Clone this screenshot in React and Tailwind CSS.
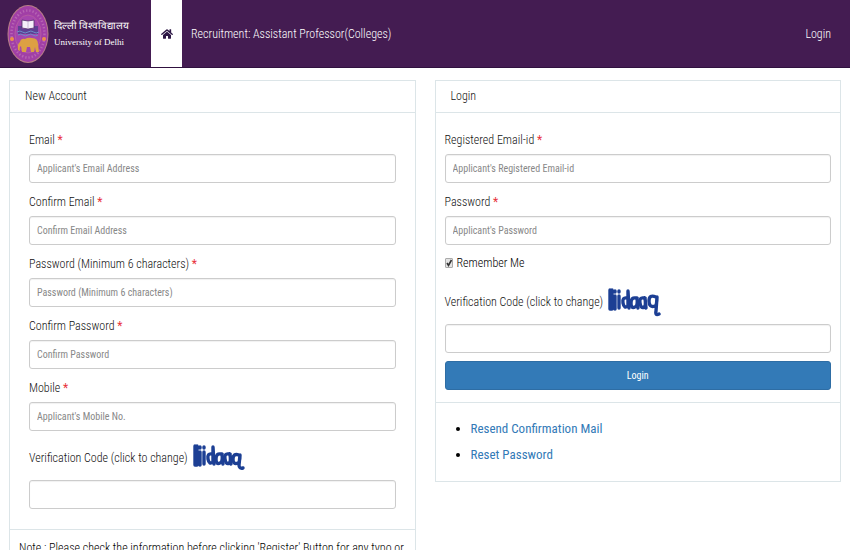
import { FaHome } from "react-icons/fa";

function Emblem() {
  return (
    <svg viewBox="0 0 42 60" className="h-[60px] w-[42px]" role="img" aria-label="University emblem">
      <ellipse cx="21" cy="30" rx="20.5" ry="29" fill="#b87f86" />
      <ellipse cx="21" cy="30" rx="19.5" ry="28" fill="#a13fa6" />
      <ellipse cx="21" cy="30" rx="16.5" ry="23.500" fill="none" stroke="#b765b4" strokeWidth="2.500" strokeDasharray="1.300 2" />
      <ellipse cx="21" cy="30" rx="13" ry="19" fill="#a546ae" stroke="#b9609f" strokeWidth="0.800" />
      <path d="M11 22h4v3h12v-3h4v8H11z" fill="#5f3f93" />
      <path d="M15 16l6 1 6-1v8l-6 1-6-1z" fill="#f6effa" stroke="#513069" strokeWidth="0.800" />
      <path d="M21 17v8" stroke="#b7a3c4" strokeWidth="0.700" />
      <path d="M10 28q3-2 5.500 0t5.500 0 5.500 0 5.500 0M11 31q3-2 5 0t5 0 5 0 5 0" fill="none" stroke="#6d8fc9" strokeWidth="1" />
      <path d="M15 48l-1-6q-2 1-1 5l-2-1q-1-6 2-8 1-4 5-3 3-2 7-1 6 0 6 6l1 8h-3l-1-5-1 5h-3l-1-5h-3l-1 5z" fill="#dda043" />
      <circle cx="5" cy="35" r="2" fill="#ec8f4a" />
      <circle cx="37" cy="35" r="2" fill="#ec8f4a" />
    </svg>
  );
}

function Captcha({ variant }) {
  const last =
    variant === "long"
      ? "M49 11q-7-3-7 4t6 5q2-1 2-9l-1 14q-1 5 3 3"
      : "M47 13q-6-2-6 4t5 4q2-1 2-8l-1 10q0 4 4 3";
  return (
    <svg viewBox="0 0 54 32" className="h-8 w-[54px]" aria-hidden="true">
      <g fill="none" stroke="#1c3f94" strokeWidth="3.400" strokeLinecap="round" strokeLinejoin="round">
        <path d="M3 4v19M5 4v19M8 10v13M8 5v1M12 10v12M12 5v1" />
        <path d="M20 12q-5-1-4 5t5 3V5l1 17" />
        <path d="M29 12q-5-1-5 5t4 4q3-1 2-9l1 10" />
        <path d="M37 12q-5-1-4 5t4 4q2-1 1-9l1 10" />
        <path d={last} />
      </g>
    </svg>
  );
}

function TextBox(props) {
  return (
    <input
      {...props}
      className="block h-[29px] w-full rounded-[3px] border border-[#ccc] bg-white px-[7px] text-[10px] font-normal text-[#555] shadow-[inset_0_1px_1px_rgba(0,0,0,0.06)] placeholder:text-[#888]"
    />
  );
}

function Field({ id, label, placeholder, type = "text" }) {
  return (
    <div>
      <label htmlFor={id} className="mb-1 block leading-5">
        {label} <span className="font-normal text-[#e8323c]">*</span>
      </label>
      <TextBox id={id} type={type} placeholder={placeholder} />
    </div>
  );
}

function Verification({ id, variant }) {
  return (
    <div>
      <div className="flex h-[49px] items-center gap-1 pt-1">
        <label htmlFor={id} className="leading-5">
          Verification Code (click to change)
        </label>
        <button type="button" aria-label="Change verification code">
          <Captcha variant={variant} />
        </button>
      </div>
      <TextBox id={id} type="text" />
    </div>
  );
}

function CheckBox({ id }) {
  return (
    <span className="grid h-2.5 w-2">
      <input
        id={id}
        type="checkbox"
        defaultChecked
        className="peer col-start-1 row-start-1 h-2.5 w-2 appearance-none rounded-[1px] border border-[#aaa] bg-[#e4e4e4]"
      />
      <svg
        viewBox="0 0 8 10"
        className="pointer-events-none invisible col-start-1 row-start-1 h-2.5 w-2 peer-checked:visible"
        aria-hidden="true"
      >
        <path d="M2 5l1.500 2.500L6.500 2" fill="none" stroke="#333" strokeWidth="1.600" />
      </svg>
    </span>
  );
}

export default function App() {
  return (
    <div className="h-screen overflow-hidden bg-white font-['Roboto_Condensed','Liberation_Sans',Arial,sans-serif] text-xs font-light text-[#111]">
      <header className="flex h-[68px] items-stretch border-b border-[#30113f] bg-[#441c52] text-white">
        <div className="flex w-[151px] items-center gap-[5px] pl-[7px]">
          <Emblem />
          <div className="whitespace-nowrap">
            <div lang="hi" className="text-[10px] leading-4">
              दिल्ली विश्वविद्यालय
            </div>
            <div className="font-['Liberation_Serif',serif] text-[9px] leading-4">University of Delhi</div>
          </div>
        </div>
        <a href="#home" aria-label="Home" className="flex w-[31px] items-center justify-center bg-white text-[#2d1745]">
          <FaHome className="h-3 w-3" />
        </a>
        <nav className="flex flex-1 items-center justify-between pr-[19px] pl-[9px]">
          <a href="#recruitment">Recruitment: Assistant Professor(Colleges)</a>
          <a href="#login">Login</a>
        </nav>
      </header>

      <main className="grid grid-cols-2 items-start gap-[19px] px-[9px] pt-3">
        <section className="border border-[#dce5e8]">
          <h2 className="border-b border-[#dce5e8] px-[15px] py-[5px] leading-[21px]">New Account</h2>
          <form className="px-[19px] pt-[17px] pb-5">
            <div className="flex flex-col gap-[9px]">
              <Field id="email" label="Email" placeholder="Applicant's Email Address" />
              <Field id="confirm-email" label="Confirm Email" placeholder="Confirm Email Address" />
              <Field
                id="new-password"
                type="password"
                label="Password (Minimum 6 characters)"
                placeholder="Password (Minimum 6 characters)"
              />
              <Field id="confirm-password" type="password" label="Confirm Password" placeholder="Confirm Password" />
              <Field id="mobile" label="Mobile" placeholder="Applicant's Mobile No." />
            </div>
            <Verification id="register-code" variant="short" />
          </form>
          <p className="border-t border-[#dce5e8] px-[9px] py-2 leading-5 text-black">
            Note : Please check the information before clicking 'Register' Button for any typo or
          </p>
        </section>

        <section className="border border-[#dce5e8]">
          <h2 className="border-b border-[#dce5e8] px-[15px] py-[5px] leading-[21px]">Login</h2>
          <form className="px-[9px] pt-[17px] pb-3">
            <div className="flex flex-col gap-[9px]">
              <Field id="login-email" label="Registered Email-id" placeholder="Applicant's Registered Email-id" />
              <Field id="login-password" type="password" label="Password" placeholder="Applicant's Password" />
            </div>
            <div className="mt-2 mb-0.5 flex items-center gap-1 leading-5 text-black">
              <CheckBox id="remember" />
              <label htmlFor="remember">Remember Me</label>
            </div>
            <Verification id="login-code" variant="long" />
            <button
              type="submit"
              className="mt-2 block h-[29px] w-full rounded-[3px] border border-[#2e6da4] bg-[#337ab7] text-[10px] font-normal text-white"
            >
              Login
            </button>
          </form>
          <ul className="list-disc border-t border-[#dce5e8] py-[13px] pl-[35px] text-[13px] leading-[26px] font-normal marker:text-black">
            <li>
              <a href="#resend" className="text-[#337ab7]">Resend Confirmation Mail</a>
            </li>
            <li>
              <a href="#reset" className="text-[#337ab7]">Reset Password</a>
            </li>
          </ul>
        </section>
      </main>
    </div>
  );
}
